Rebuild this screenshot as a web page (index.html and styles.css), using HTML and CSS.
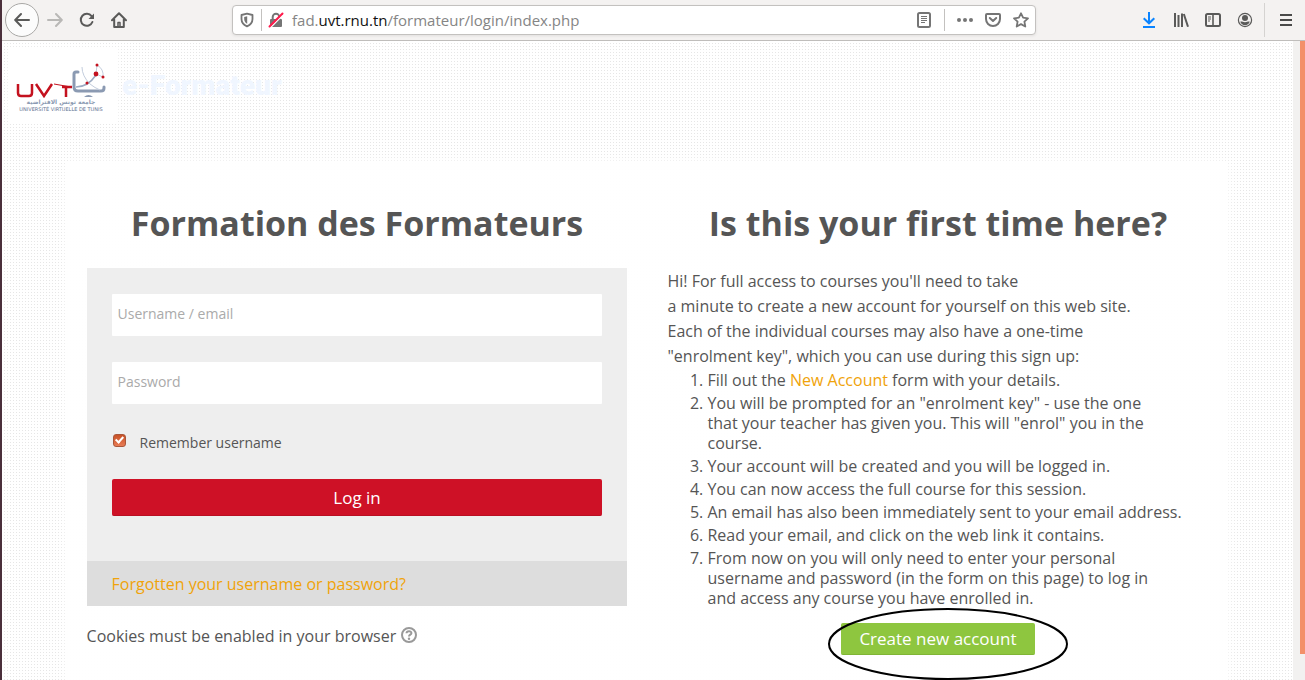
FILE: index.html
```html
<!DOCTYPE html>
<html lang="en">
  <head>
    <meta charset="utf-8" />
    <title>Formation des Formateurs</title>
    <meta name="viewport" content="width=device-width, initial-scale=1.0" />
    <link rel="stylesheet" href="styles.css">
  </head>
  <body>
    <div class="toolbar">
      <button class="tool back" aria-label="Back">
        <svg width="16" height="16" viewBox="0 0 16 16" fill="none" stroke="#5a5a59" stroke-width="2" stroke-linecap="round" stroke-linejoin="round"><path d="M15 8H1.5M7 2L1.2 8L7 14" /></svg>
      </button>
      <button class="tool" aria-label="Forward">
        <svg width="16" height="16" viewBox="0 0 16 16" fill="none" stroke="#b9b8b6" stroke-width="2" stroke-linecap="round" stroke-linejoin="round"><path d="M1 8H14.5M9 2L14.8 8L9 14" /></svg>
      </button>
      <button class="tool" aria-label="Reload">
        <svg width="16" height="16" viewBox="0 0 16 16" fill="none" stroke="#5a5a59" stroke-width="2" stroke-linecap="round"><path d="M13.4 10A6 6 0 1 1 12.6 4.2" /><path d="M15 1.5V7H9.5Z" fill="#5a5a59" stroke="none" /></svg>
      </button>
      <button class="tool" aria-label="Home">
        <svg width="16" height="16" viewBox="0 0 16 16" fill="none" stroke="#5a5a59" stroke-width="2" stroke-linecap="round" stroke-linejoin="round"><path d="M1 8.3L8 1.3L15 8.3M3.2 7.5V15H12.8V7.5" /><path d="M7 15V10.5H9V15" stroke-width="1.5" /></svg>
      </button>
      <div class="urlbar">
        <svg class="shield" width="14" height="16" viewBox="0 0 14 16" fill="none" stroke="#757575" stroke-width="1.8" stroke-linejoin="round"><path d="M7 1.7L12.5 3V7C12.5 10.5 10.5 12.8 7 14.3C3.5 12.8 1.5 10.5 1.5 7V3Z" /><path d="M7.2 4.3V11.8C5.2 10.7 4.2 9.2 4.2 7V5Z" fill="#757575" stroke="none" /></svg>
        <span class="split"></span>
        <svg class="lock" width="16" height="16" viewBox="0 0 16 16" fill="none"><rect x="2" y="7" width="12" height="8" rx="1" fill="#757575" /><path d="M4.7 7V5A3.3 3.3 0 0 1 11.3 5V7" stroke="#757575" stroke-width="2" /><path d="M2.5 15.5L15.5 2.5" stroke="#fff" stroke-width="1.5" /><path d="M1.5 14.5L14.5 1.5" stroke="#ff1a4b" stroke-width="2" stroke-linecap="round" /></svg>
        <div class="address" role="textbox" aria-label="Address" contenteditable="true" spellcheck="false">fad.<span class="domain">uvt.rnu.tn</span>/formateur/login/index.php</div>
        <svg width="16" height="16" viewBox="0 0 16 16" fill="none" stroke="#757575"><rect x="2" y="1" width="12" height="14" rx="1.5" stroke-width="2" /><path d="M5 4.5H11M5 6.5H11M5 8.5H11M5 10.5H9" /></svg>
        <span class="split reader-split"></span>
        <svg class="dots" width="16" height="16" viewBox="0 0 16 16" fill="#757575"><circle cx="2" cy="8" r="2" /><circle cx="8" cy="8" r="2" /><circle cx="14" cy="8" r="2" /></svg>
        <svg class="pocket" width="16" height="16" viewBox="0 0 16 16" fill="none" stroke="#757575" stroke-width="2" stroke-linecap="round" stroke-linejoin="round"><path d="M2 2H14Q15 2 15 3V7A7 7 0 0 1 1 7V3Q1 2 2 2Z" /><path d="M4.8 6L8 9L11.2 6" /></svg>
        <svg width="16" height="16" viewBox="0 0 16 16" fill="none" stroke="#757575" stroke-width="1.8" stroke-linejoin="round"><path d="M8 1.3L10.1 5.7L15 6.3L11.4 9.6L12.3 14.5L8 12.1L3.7 14.5L4.6 9.6L1 6.3L5.9 5.7Z" /></svg>
      </div>
      <button class="tool" aria-label="Downloads">
        <svg width="16" height="16" viewBox="0 0 16 16" fill="none" stroke="#0a84ff" stroke-width="2"><path d="M8 0V11M2.7 6.2L8 11.3L13.3 6.2M2 15H14" /></svg>
      </button>
      <button class="tool" aria-label="Library">
        <svg width="16" height="16" viewBox="0 0 16 16" fill="none" stroke="#5a5a59" stroke-width="2"><path d="M2 1V15M5.5 3V15M9 1.5V15" /><path d="M10.8 2L15 14.7" /></svg>
      </button>
      <button class="tool" aria-label="Sidebars">
        <svg width="16" height="16" viewBox="0 0 16 16" fill="none" stroke="#5a5a59"><rect x="1" y="2" width="14" height="12" rx="1.5" stroke-width="2" /><path d="M8 2V14" stroke-width="1.6" /><path d="M3 5H6M3 7H6M3 9H5" /></svg>
      </button>
      <button class="tool" aria-label="Account">
        <svg width="16" height="16" viewBox="0 0 16 16" fill="#5a5a59"><circle cx="8" cy="8" r="6.6" fill="none" stroke="#5a5a59" stroke-width="1.2" /><circle cx="8" cy="6" r="3" /><path d="M3.3 9.7C5 9.3 5.7 10.2 8 10.2S11 9.3 12.7 9.7C12 11.9 10.2 13.2 8 13.2S4 11.9 3.3 9.7Z" /></svg>
      </button>
      <span class="tool-split"></span>
      <button class="tool" aria-label="Open menu">
        <svg width="16" height="16" viewBox="0 0 16 16" stroke="#4a4a49" stroke-width="2"><path d="M2 3H14M2 8H14M2 13H14" /></svg>
      </button>
    </div>

    <div class="window">
      <div class="page">
        <header class="site-header">
          <a class="logo" href="#" aria-label="Université Virtuelle de Tunis">
            <svg width="110" height="74" viewBox="0 0 110 74" fill="none">
              <path d="M70 24H68Q66 24 66 26V39Q66 43 70 43H93Q96 43 96 40V39" stroke="#8b9ab2" stroke-width="3" stroke-linecap="round" stroke-linejoin="round" />
              <path d="M76 49Q80.5 45 85 49Z" fill="#8b9ab2" />
              <g stroke="#c3cddd">
                <path d="M89 17Q96 21 95 29" />
                <path d="M74 19Q74 28 82 36Q87 40 92 42" />
                <path d="M89 17L88 26L95 29" />
              </g>
              <path d="M68 39Q80 39 88 27" stroke="#9cabc2" stroke-width="1.5" />
              <g fill="#c4121f">
                <circle cx="88" cy="26" r="2.4" />
                <circle cx="89" cy="17" r="1.5" />
                <circle cx="95" cy="29" r="1.5" />
                <circle cx="79" cy="35" r="1.5" />
              </g>
              <g stroke="#c4121f">
                <path d="M10 36V45Q10 48 13 48H21Q24 48 24 45V36M28 36L36 48L44 36" stroke-width="2.5" />
                <path d="M46 36L63 39" />
                <path d="M58 39V49M54 39H64" stroke-width="2.5" />
              </g>
              <text class="logo-arabic" x="53" y="56" text-anchor="middle">جامعة تونس الافتراضية</text>
              <text class="logo-name" x="53" y="63" text-anchor="middle">UNIVERSITÉ VIRTUELLE DE TUNIS</text>
            </svg>
          </a>
          <span class="site-name">e-Formateur</span>
        </header>

        <main class="content">
          <section>
            <h1>Formation des Formateurs</h1>
            <form class="login">
              <div class="fields">
                <input class="field" type="text" placeholder="Username / email" aria-label="Username / email" />
                <input class="field" type="password" placeholder="Password" aria-label="Password" />
                <div class="remember">
                  <input type="checkbox" id="remember" checked />
                  <label for="remember">Remember username</label>
                </div>
                <button class="login-button" type="submit">Log in</button>
              </div>
              <div class="forgotten"><a href="#">Forgotten your username or password?</a></div>
            </form>
            <div class="cookies">
              Cookies must be enabled in your browser
              <a class="help" href="#" aria-label="Help with cookies">
                <svg width="16" height="16" viewBox="0 0 16 16" fill="none" stroke="#999"><circle cx="8" cy="8" r="7" stroke-width="2" /><path d="M5.5 6.3C5.6 3.4 10.6 3.5 10.4 6.2C10.3 7.7 8 7.7 8 9.5" stroke-width="2" /><circle cx="8" cy="11.8" r="1.2" fill="#999" stroke="none" /></svg>
              </a>
            </div>
          </section>

          <section>
            <h1>Is this your first time here?</h1>
            <p class="intro">
              Hi! For full access to courses you'll need to take<br />
              a minute to create a new account for yourself on this web site.<br />
              Each of the individual courses may also have a one-time<br />
              "enrolment key", which you can use during this sign up:
            </p>
            <ol class="steps">
              <li>Fill out the <a href="#">New Account</a> form with your details.</li>
              <li>You will be prompted for an "enrolment key" - use the one<br />that your teacher has given you. This will "enrol" you in the<br />course.</li>
              <li>Your account will be created and you will be logged in.</li>
              <li>You can now access the full course for this session.</li>
              <li>An email has also been immediately sent to your email address.</li>
              <li>Read your email, and click on the web link it contains.</li>
              <li>From now on you will only need to enter your personal<br />username and password (in the form on this page) to log in<br />and access any course you have enrolled in.</li>
            </ol>
            <div class="signup">
              <button class="signup-button" type="button">Create new account</button>
              <svg class="ring" width="242" height="72" viewBox="0 0 242 72" fill="none" stroke="#000" stroke-width="2"><ellipse cx="121" cy="36" rx="119" ry="35" /></svg>
            </div>
          </section>
        </main>
      </div>
      <div class="scrollbar"><div class="thumb"></div></div>
    </div>
  </body>
</html>
```
FILE: styles.css
```css
* {
  box-sizing: border-box;
}
body {
  margin: 0;
  height: 100vh;
  overflow: hidden;
  display: flex;
  flex-direction: column;
  border-left: 2px solid #4a2f3b;
  font-family: "Open Sans", "Noto Sans", sans-serif;
  font-size: 16px;
  color: #555;
}
button,
input {
  font-family: inherit;
}
button {
  border: 0;
  padding: 0;
  cursor: pointer;
}
svg {
  display: block;
  flex: none;
}
a {
  color: #f0a30a;
  text-decoration: none;
}

/* browser toolbar */
.toolbar {
  display: flex;
  align-items: center;
  flex: none;
  height: 41px;
  padding: 0 3px;
  background: #f4f2f1;
  border-bottom: 1px solid #bfbdbb;
}
.tool {
  display: flex;
  align-items: center;
  justify-content: center;
  width: 32px;
  height: 32px;
  background: none;
}
.back {
  width: 34px;
  height: 34px;
  border: 1px solid #a9a8a6;
  border-radius: 50%;
  background: #fcfcfc;
}
.tool-split {
  width: 1px;
  height: 34px;
  margin: 0 5px 0 3px;
  background: #d5d3d1;
}
.urlbar {
  display: flex;
  align-items: center;
  flex: 1;
  min-width: 0;
  height: 30px;
  margin: 0 97px;
  padding: 0 6px;
  background: #fff;
  border: 1px solid #c3c1bf;
  border-radius: 4px;
  box-shadow: 0 1px 3px rgba(0, 0, 0, 0.08);
}
.split {
  width: 1px;
  height: 22px;
  margin: 0 6px 0 7px;
  background: #c3c1bf;
}
.shield {
  margin-left: 1px;
}
.address {
  flex: 1;
  min-width: 0;
  margin: 0 8px;
  overflow: hidden;
  white-space: nowrap;
  font-size: 15px;
  line-height: 20px;
  color: #858585;
  outline: none;
}
.domain {
  color: #111;
}
.reader-split {
  margin: 0 12px;
}
.pocket {
  margin: 0 12px;
}

/* page */
.window {
  display: flex;
  flex: 1;
  min-height: 0;
}
.page {
  flex: 1;
  overflow: hidden;
  background-color: #fff;
  background-image: linear-gradient(90deg, #fff 2px, transparent 2px), linear-gradient(#fff 2px, #e6e6e6 2px);
  background-size: 3px 3px;
}
.scrollbar {
  width: 12px;
  padding-left: 7px;
  background: #f2f1f0;
}
.thumb {
  height: 96%;
  background: #f39069;
}
.site-header {
  display: flex;
  align-items: center;
  gap: 4px;
  height: 121px;
  padding: 7px 6px 40px;
}
.logo {
  background: #fff;
  box-shadow: 0 0 3px #fff;
}
.logo-arabic {
  font: bold 6px "DejaVu Sans", sans-serif;
  fill: #8b9ab2;
}
.logo-name {
  font: 5px "DejaVu Sans", sans-serif;
  fill: #5d708f;
}
.site-name {
  font-family: Roboto, sans-serif;
  font-size: 28px;
  font-weight: 900;
  color: #f0f6ff;
}
.content {
  display: grid;
  grid-template-columns: 1fr 1fr;
  gap: 40px;
  width: 90%;
  min-height: 100%;
  margin: 0 auto;
  padding: 31px 20px;
  background: rgba(255, 255, 255, 0.95);
  box-shadow: 0 0 10px #fff;
}
h1 {
  margin: 0 0 15px;
  font-size: 34px;
  line-height: 60px;
  font-weight: 700;
  text-align: center;
}

/* login form */
.login {
  background: #eee;
}
.fields {
  display: flex;
  flex-direction: column;
  padding: 26px 25px 45px;
}
.field {
  height: 42px;
  margin-bottom: 26px;
  padding: 0 6px 4px;
  background: #fff;
  border: 0;
  border-radius: 1px;
  font-size: 14px;
  color: #555;
}
.field::placeholder {
  color: #aaa;
}
.remember {
  display: flex;
  align-items: center;
  gap: 14px;
  height: 24px;
  margin-bottom: 25px;
  font-size: 14px;
}
.remember input {
  appearance: none;
  position: relative;
  width: 13px;
  height: 13px;
  margin: 0 0 3px 1px;
  background: linear-gradient(#c85126, #e87b54);
  border: 1px solid #a9563a;
  border-radius: 3px;
}
.remember input:checked::after {
  content: "";
  position: absolute;
  left: 3px;
  top: 0;
  width: 3px;
  height: 6px;
  border: solid #fff;
  border-width: 0 2px 2px 0;
  transform: rotate(42deg);
}
.login-button,
.signup-button {
  font-size: 17px;
  color: #fff;
  border-radius: 2px;
}
.login-button {
  height: 37px;
  background: #ce1126;
  border-bottom: 1px solid #b90f22;
}
.forgotten {
  padding: 11px 25px 9px;
  line-height: 25px;
  background: #ddd;
}
.cookies {
  display: flex;
  align-items: center;
  gap: 5px;
  padding-top: 18px;
  line-height: 25px;
}
.help {
  padding-bottom: 4px;
}

/* sign up instructions */
.intro {
  margin: 0;
  padding-top: 1px;
  line-height: 25px;
}
.steps {
  margin: 0 0 15px;
  padding: 1px 0 0 40px;
  line-height: 20px;
}
.steps li {
  margin-bottom: 3px;
}
.signup {
  position: relative;
  width: max-content;
  margin: 0 auto;
}
.signup-button {
  height: 32px;
  padding: 0 18px;
  background: #8ec63f;
  border-bottom: 1px solid #80b535;
}
.ring {
  position: absolute;
  left: 50%;
  top: -15px;
  margin-left: -111px;
  pointer-events: none;
}
```
